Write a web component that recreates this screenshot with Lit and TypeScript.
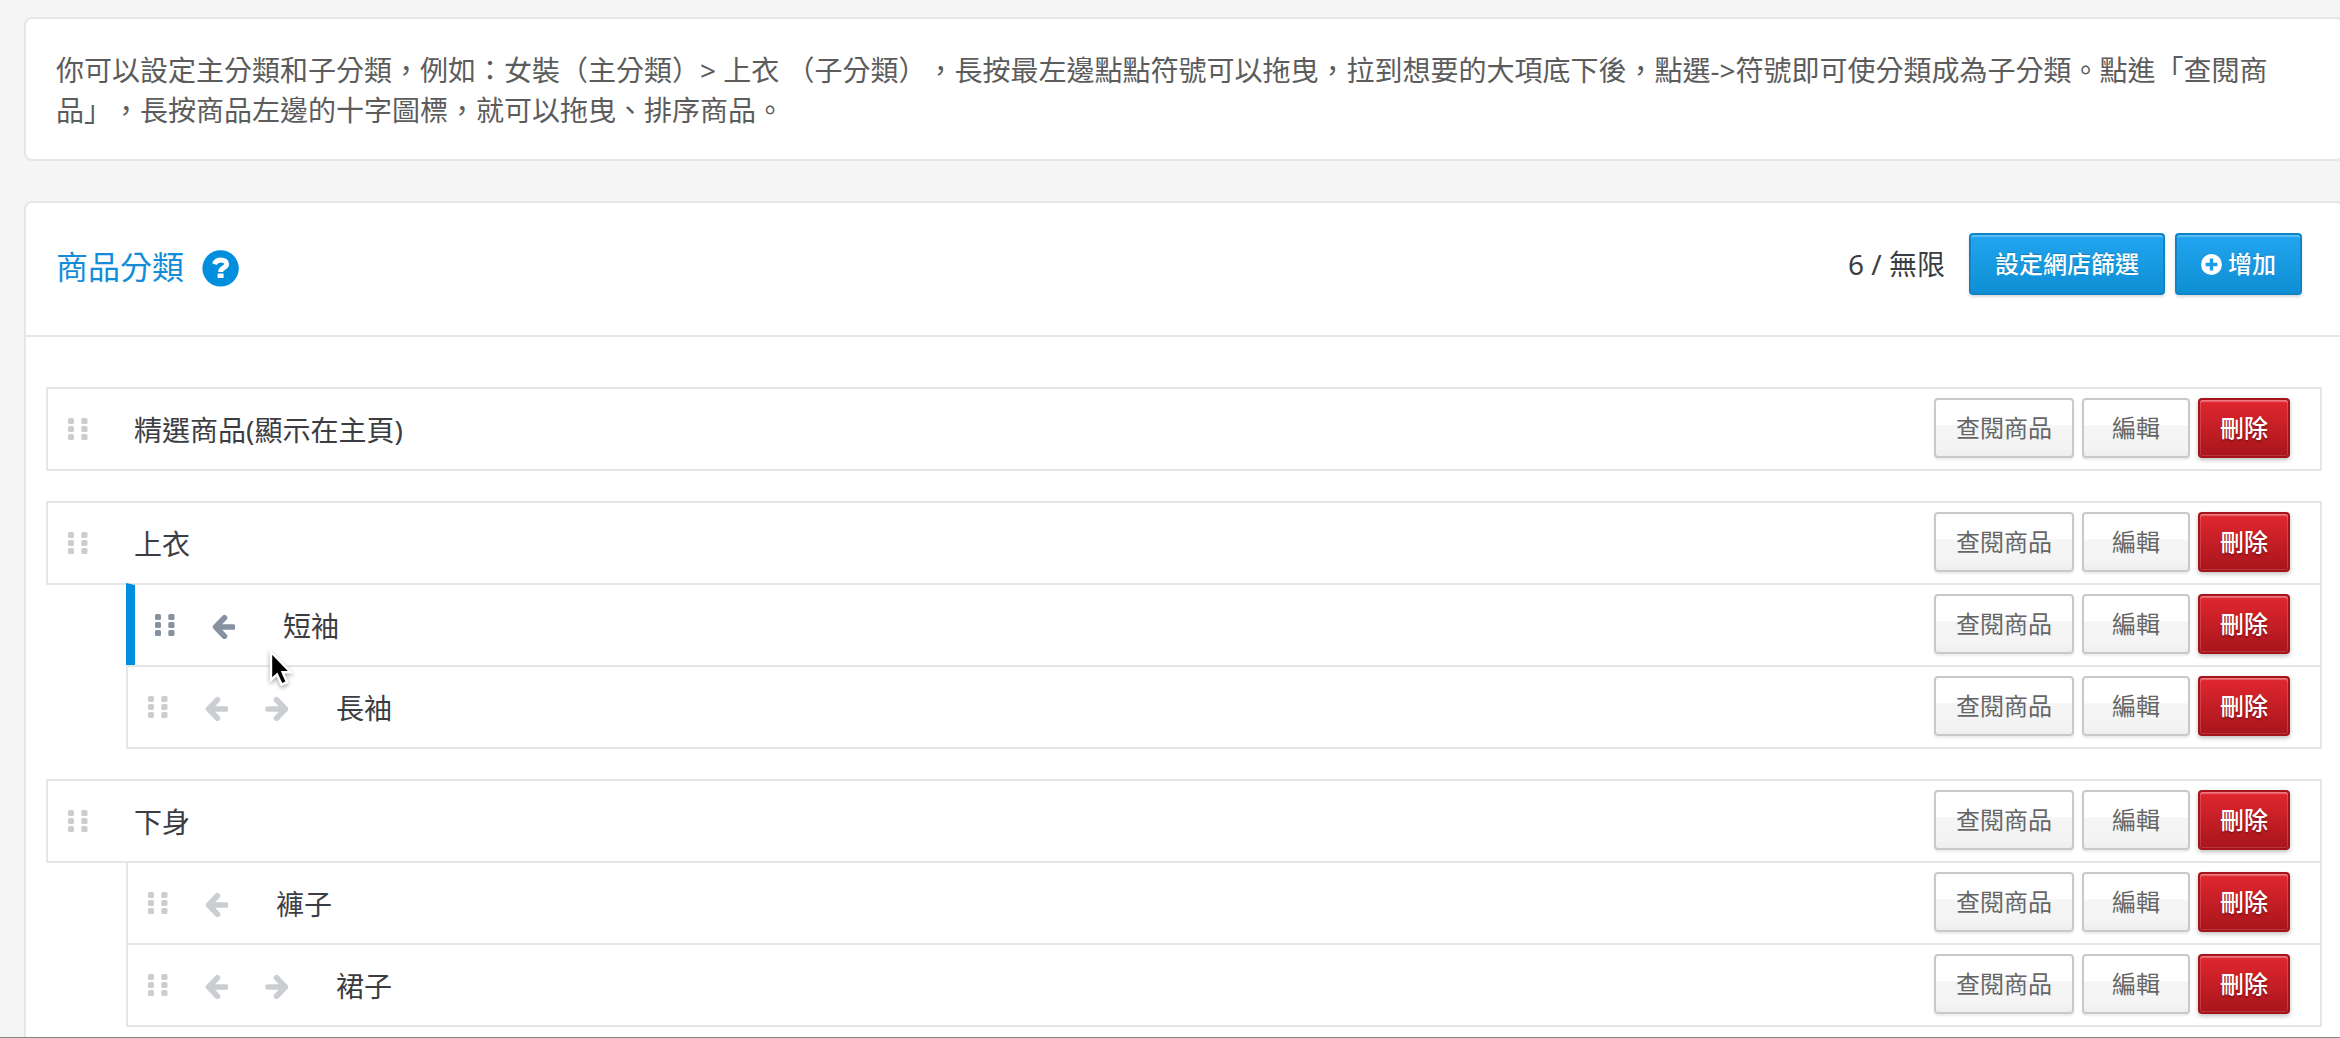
import { LitElement, html, svg, css, nothing } from "lit";
import { customElement, property, state } from "lit/decorators.js";
import { classMap } from "lit/directives/class-map.js";

interface Category {
  name: string;
  canIndent?: boolean;
  active?: boolean;
  children?: Category[];
}

const CATEGORIES: Category[] = [
  { name: "精選商品(顯示在主頁)" },
  {
    name: "上衣",
    children: [
      { name: "短袖", active: true },
      { name: "長袖", canIndent: true },
    ],
  },
  {
    name: "下身",
    children: [{ name: "褲子" }, { name: "裙子", canIndent: true }],
  },
];

const base = css`
  * {
    box-sizing: border-box;
  }
  button {
    margin: 0;
    font-family: inherit;
    cursor: pointer;
  }
  svg {
    display: block;
  }
  .btn {
    display: inline-flex;
    align-items: center;
    justify-content: center;
    gap: 6px;
    height: 60px;
    padding: 0 20px;
    border: 2px solid #c9c9c9;
    border-radius: 4px;
    font-size: 24px;
    line-height: 36px;
    white-space: nowrap;
    color: #666;
    background: linear-gradient(#fff 0, #fff 44%, #f5f5f5 46%, #f4f4f4 85%, #eee);
    box-shadow: 0 2px 2px rgba(0, 0, 0, 0.08);
  }
  .btn.wide {
    padding: 0 28px;
  }
  .btn.primary {
    height: 62px;
    padding: 0 24px;
    border-color: #0e84c7;
    color: #fff;
    font-weight: 500;
    background: linear-gradient(#22a5f1, #0e8fd3);
    box-shadow: inset 0 2px 1px rgba(255, 255, 255, 0.28), 0 2px 3px rgba(0, 0, 0, 0.15);
    text-shadow: 0 -1px 0 rgba(0, 0, 0, 0.2);
  }
  .btn.danger {
    border-color: #a5141b;
    color: #fff;
    font-weight: 500;
    background: linear-gradient(#e1272f, #a9151c);
    box-shadow: inset 0 2px 1px rgba(255, 255, 255, 0.3), inset 0 0 0 1px rgba(255, 255, 255, 0.14),
      0 2px 4px rgba(0, 0, 0, 0.25);
    text-shadow: 0 2px 2px rgba(0, 0, 0, 0.3);
  }
`;

@customElement("category-row")
export class CategoryRow extends LitElement {
  @property({ attribute: false }) category!: Category;
  @property({ type: Boolean }) child = false;

  static styles = [
    base,
    css`
      :host {
        display: block;
      }
      .row {
        display: flex;
        align-items: center;
        gap: 36px;
        height: 84px;
        padding: 0 30px 0 20px;
        border: 2px solid #e6e6e6;
        background: #fff;
        color: #cacdd2;
      }
      .row.active {
        border-left: 9px solid #008fde;
        color: #8792a0;
      }
      .icon {
        flex: none;
        padding: 0;
        border: 0;
        background: none;
        color: inherit;
      }
      .handle {
        cursor: grab;
      }
      .name {
        flex: 1;
        min-width: 0;
        padding: 2px 0 0 10px;
        font-size: 28px;
        line-height: 40px;
        color: #3c3d43;
      }
      .row.child .name {
        padding-left: 12px;
      }
      .actions {
        display: flex;
        gap: 8px;
        padding-bottom: 2px;
      }
    `,
  ];

  private arrow(label: string, d: string) {
    return html`<button class="icon" type="button" aria-label=${label}>
      <svg width="24" height="28" viewBox="0 0 24 28" fill="none" stroke="currentColor" stroke-linecap="round" stroke-linejoin="round">
        ${svg`<path d=${d} stroke-width="5.6" />`}
      </svg>
    </button>`;
  }

  render() {
    const { name, active = false, canIndent } = this.category;
    return html`
      <div class=${classMap({ row: true, child: this.child, active })}>
        <button class="icon handle" type="button" aria-label="拖曳">
          <svg width="20" height="22" viewBox="0 0 20 22" fill="currentColor">
            ${[0, 8, 16].map(
              (y) => svg`<rect x="0" y=${y} width="6" height="6" rx="1.5" /><rect x="13.3" y=${y} width="6.2" height="6" rx="1.5" />`,
            )}
          </svg>
        </button>
        ${this.child ? this.arrow("上移一層", "M13.5 6.8L4.6 16L13.5 25.2M5.6 16H22") : nothing}
        ${canIndent ? this.arrow("下移一層", "M12.5 6.8L21.4 16L12.5 25.2M20.4 16H4") : nothing}
        <span class="name">${name}</span>
        <div class="actions">
          <button class="btn" type="button">查閱商品</button>
          <button class="btn wide" type="button">編輯</button>
          <button class="btn danger" type="button">刪除</button>
        </div>
      </div>
    `;
  }
}

@customElement("app-root")
export class AppRoot extends LitElement {
  @state() private categories = CATEGORIES;

  static styles = [
    base,
    css`
      :host {
        display: block;
        font-family: "Noto Sans", "Noto Sans CJK TC", sans-serif;
        text-spacing-trim: space-all;
      }
      .page {
        display: flex;
        flex-direction: column;
        gap: 40px;
        min-height: 100vh;
        padding: 17px 0 0 24px;
        border-bottom: 1px solid #858585;
        background: #f5f5f5;
        overflow: hidden;
      }
      .card {
        margin-right: -4px;
        border: 2px solid #e6e6e6;
        border-radius: 8px;
        background: #fff;
      }
      .note {
        padding: 31px 30px 29px;
      }
      .note p {
        margin: 0;
        font-size: 28px;
        line-height: 40px;
        color: #5c5c5c;
      }
      .panel {
        flex: 1;
        border-bottom: 0;
        border-radius: 8px 8px 0 0;
      }
      .head {
        display: flex;
        align-items: center;
        justify-content: space-between;
        height: 134px;
        padding: 0 40px 4px 30px;
        border-bottom: 2px solid #e6e6e6;
      }
      .title {
        display: flex;
        align-items: center;
        gap: 16px;
      }
      .title h1 {
        margin: 0;
        font-size: 32px;
        line-height: 44px;
        font-weight: 400;
        color: #138dd9;
      }
      .help {
        padding: 0;
        border: 0;
        background: none;
        color: #008fde;
      }
      .tools {
        display: flex;
        align-items: center;
        gap: 10px;
        padding-bottom: 6px;
      }
      .count {
        margin-right: 14px;
        font-size: 28px;
        line-height: 40px;
        color: #3c3d43;
      }
      .list {
        display: flex;
        flex-direction: column;
        gap: 30px;
        margin: 0;
        padding: 50px 20px 10px;
        list-style: none;
      }
      .children {
        margin: 0;
        padding: 0 0 0 80px;
        list-style: none;
      }
      .children li {
        position: relative;
        margin-top: -2px;
      }
      .cursor {
        position: absolute;
        left: 141px;
        top: 66px;
        z-index: 1;
        filter: drop-shadow(0 2px 2px rgba(0, 0, 0, 0.35));
        pointer-events: none;
      }
    `,
  ];

  private renderChild(c: Category) {
    return html`<li>
      <category-row .category=${c} child></category-row>
      ${c.active
        ? html`<svg class="cursor" width="30" height="42" viewBox="0 0 30 42" aria-hidden="true">
            <path d="M4 3V31L10 25.4L14.6 35.6L20 33.2L15.6 23.2H23.6Z" fill="#000" stroke="#fff" stroke-width="2.4" />
          </svg>`
        : nothing}
    </li>`;
  }

  render() {
    return html`
      <main class="page">
        <section class="card note">
          <p>你可以設定主分類和子分類，例如：女裝（主分類）> 上衣 （子分類），長按最左邊點點符號可以拖曳，拉到想要的大項底下後，點選->符號即可使分類成為子分類。點進「查閱商品」，長按商品左邊的十字圖標，就可以拖曳、排序商品。</p>
        </section>
        <section class="card panel">
          <header class="head">
            <div class="title">
              <h1>商品分類</h1>
              <button class="help" type="button" aria-label="說明">
                <svg width="40" height="40" viewBox="0 0 40 40">
                  <circle cx="20.6" cy="21.4" r="18.2" fill="currentColor" />
                  <path d="M14.4 17.2C15.6 14 17.8 12.9 20.8 12.9C24.2 12.9 26.6 14.4 26.6 17.2C26.6 21 20.6 20.4 20.6 25" fill="none" stroke="#fff" stroke-width="5" />
                  <rect x="17.6" y="26.4" width="6" height="4.6" rx="0.6" fill="#fff" />
                </svg>
              </button>
            </div>
            <div class="tools">
              <span class="count">6 / 無限</span>
              <button class="btn primary" type="button">設定網店篩選</button>
              <button class="btn primary" type="button">
                <svg width="21" height="21" viewBox="0 0 21 21">
                  <circle cx="10.5" cy="10.5" r="10.5" fill="#fff" />
                  <path d="M10.5 4.6V16.4M4.6 10.5H16.4" stroke="#1b9ce6" stroke-width="3.4" />
                </svg>
                增加
              </button>
            </div>
          </header>
          <ul class="list">
            ${this.categories.map(
              (c) => html`<li>
                <category-row .category=${c}></category-row>
                ${c.children ? html`<ul class="children">${c.children.map((k) => this.renderChild(k))}</ul>` : nothing}
              </li>`,
            )}
          </ul>
        </section>
      </main>
    `;
  }
}
